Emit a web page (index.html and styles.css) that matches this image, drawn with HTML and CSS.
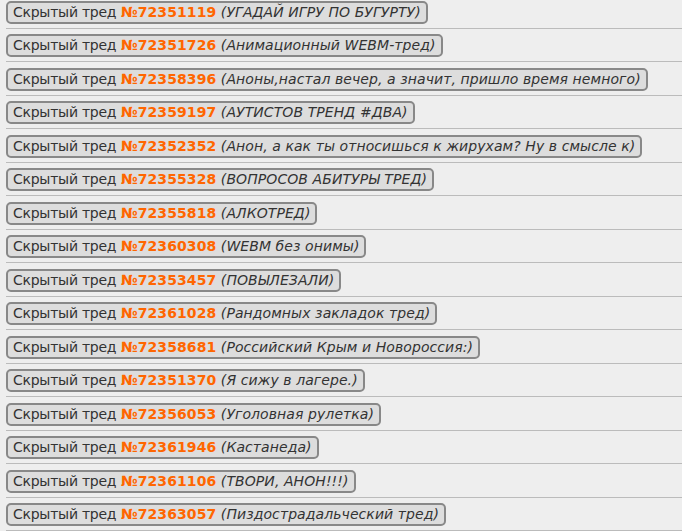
FILE: index.html
```html
<!DOCTYPE html>
<html lang="ru">
<head>
    <meta charset="UTF-8">
    <title>Скрытые треды</title>
    <link rel="stylesheet" href="styles.css">
</head>
<body>
    <div class="threads">
        <div class="hidden-thread"><span class="label">Скрытый тред</span> <span class="num">№72351119</span> <em>(УГАДАЙ ИГРУ ПО БУГУРТУ)</em></div>
        <hr>
        <div class="hidden-thread"><span class="label">Скрытый тред</span> <span class="num">№72351726</span> <em>(Анимационный WEBM-тред)</em></div>
        <hr>
        <div class="hidden-thread"><span class="label">Скрытый тред</span> <span class="num">№72358396</span> <em>(Аноны,настал вечер, а значит, пришло время немного)</em></div>
        <hr>
        <div class="hidden-thread"><span class="label">Скрытый тред</span> <span class="num">№72359197</span> <em>(АУТИСТОВ ТРЕНД #ДВА)</em></div>
        <hr>
        <div class="hidden-thread"><span class="label">Скрытый тред</span> <span class="num">№72352352</span> <em>(Анон, а как ты относишься к жирухам? Ну в смысле к)</em></div>
        <hr>
        <div class="hidden-thread"><span class="label">Скрытый тред</span> <span class="num">№72355328</span> <em>(ВОПРОСОВ АБИТУРЫ ТРЕД)</em></div>
        <hr>
        <div class="hidden-thread"><span class="label">Скрытый тред</span> <span class="num">№72355818</span> <em>(АЛКОТРЕД)</em></div>
        <hr>
        <div class="hidden-thread"><span class="label">Скрытый тред</span> <span class="num">№72360308</span> <em>(WEBM без онимы)</em></div>
        <hr>
        <div class="hidden-thread"><span class="label">Скрытый тред</span> <span class="num">№72353457</span> <em>(ПОВЫЛЕЗАЛИ)</em></div>
        <hr>
        <div class="hidden-thread"><span class="label">Скрытый тред</span> <span class="num">№72361028</span> <em>(Рандомных закладок тред)</em></div>
        <hr>
        <div class="hidden-thread"><span class="label">Скрытый тред</span> <span class="num">№72358681</span> <em>(Российский Крым и Новороссия:)</em></div>
        <hr>
        <div class="hidden-thread"><span class="label">Скрытый тред</span> <span class="num">№72351370</span> <em>(Я сижу в лагере.)</em></div>
        <hr>
        <div class="hidden-thread"><span class="label">Скрытый тред</span> <span class="num">№72356053</span> <em>(Уголовная рулетка)</em></div>
        <hr>
        <div class="hidden-thread"><span class="label">Скрытый тред</span> <span class="num">№72361946</span> <em>(Кастанеда)</em></div>
        <hr>
        <div class="hidden-thread"><span class="label">Скрытый тред</span> <span class="num">№72361106</span> <em>(ТВОРИ, АНОН!!!)</em></div>
        <hr>
        <div class="hidden-thread"><span class="label">Скрытый тред</span> <span class="num">№72363057</span> <em>(Пиздострадальческий тред)</em></div>
        <hr>
    </div>
</body>
</html>
```

FILE: styles.css
```css
body {
    margin: 0;
    background-color: #eeeeee;
    font-family: "DejaVu Sans", Verdana, sans-serif;
    font-size: 14px;
    color: #333;
}
.threads {
    display: flex;
    flex-direction: column;
    align-items: flex-start;
    padding: 1px 0 0 6px;
}
.hidden-thread {
    background-color: #dddddd;
    border: 2px solid #888;
    border-radius: 5px;
    padding: 0 5px;
    line-height: 19px;
    white-space: nowrap;
}
.label {
    letter-spacing: -0.25px;
}
.num {
    color: #ff6600;
    font-weight: bold;
    letter-spacing: 0.1px;
}
em {
    letter-spacing: 0.08px;
}
hr {
    align-self: stretch;
    border: 0;
    border-top: 1px solid #bbb;
    height: 0;
    margin: 4px 0 5.47px;
}
```
